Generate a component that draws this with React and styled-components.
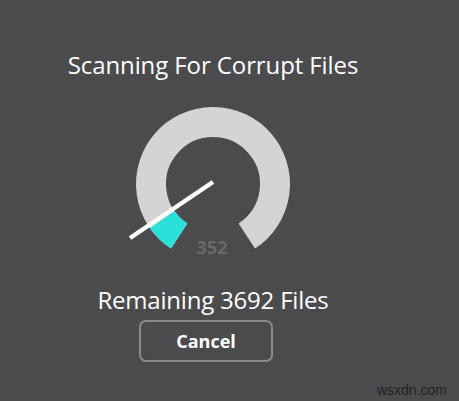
import styled, { createGlobalStyle } from 'styled-components';

const GlobalStyle = createGlobalStyle`
	html, body {
		margin: 0;
		padding: 0;
		background-color: #4b4b4d;
	}
`;

const Page = styled.div`
	position: relative;
	width: 459px;
	height: 401px;
	box-sizing: border-box;
	padding: 49px 33px 0 0;
	display: flex;
	flex-direction: column;
	align-items: center;
	font-family: 'Open Sans', 'Noto Sans', sans-serif;
	color: #ffffff;
	overflow: hidden;
`;

const Title = styled.div`
	font-size: 24px;
	line-height: 32px;
	letter-spacing: -0.1px;
	white-space: nowrap;
`;

const GaugeSvg = styled.svg`
	display: block;
	margin-top: 21px;
	width: 180px;
	height: 160px;
`;

const Remaining = styled.div`
	margin-top: 23px;
	font-size: 24px;
	line-height: 30px;
	letter-spacing: -0.2px;
	white-space: nowrap;
`;

const CancelButton = styled.button`
	margin-top: 5px;
	margin-right: 14px;
	width: 134px;
	height: 42px;
	border: 2px solid #8a8a8a;
	border-radius: 7px;
	background: transparent;
	color: #ffffff;
	font-family: 'Open Sans', 'Noto Sans', sans-serif;
	font-weight: 700;
	font-size: 18px;
	cursor: pointer;
`;

const Watermark = styled.div`
	position: absolute;
	right: 12px;
	bottom: 3px;
	font-family: 'Liberation Sans', Arial, sans-serif;
	font-size: 14px;
	color: #232325;
`;

const Gauge = ({ value }) => (
	<GaugeSvg viewBox="0 0 180 160">
		<path
			d="M56.2 134 A62 62 0 1 1 123.8 134"
			fill="none"
			stroke="#d4d4d4"
			strokeWidth="30"
		/>
		<path
			d="M56.2 134 A62 62 0 0 1 39.2 117.6"
			fill="none"
			stroke="#2ae0d8"
			strokeWidth="30"
		/>
		<line x1="7" y1="136" x2="90" y2="80" stroke="#ffffff" strokeWidth="4.5" />
		<text
			x="89"
			y="152"
			textAnchor="middle"
			fill="#6a6a6a"
			fontFamily="'Open Sans', sans-serif"
			fontWeight="700"
			fontSize="18"
		>
			{value}
		</text>
	</GaugeSvg>
);

const App = () => {
	return (
		<>
			<GlobalStyle />
			<Page>
				<Title>Scanning For Corrupt Files</Title>
				<Gauge value={352} />
				<Remaining>Remaining 3692 Files</Remaining>
				<CancelButton>Cancel</CancelButton>
				<Watermark>wsxdn.com</Watermark>
			</Page>
		</>
	);
};

export default App;
